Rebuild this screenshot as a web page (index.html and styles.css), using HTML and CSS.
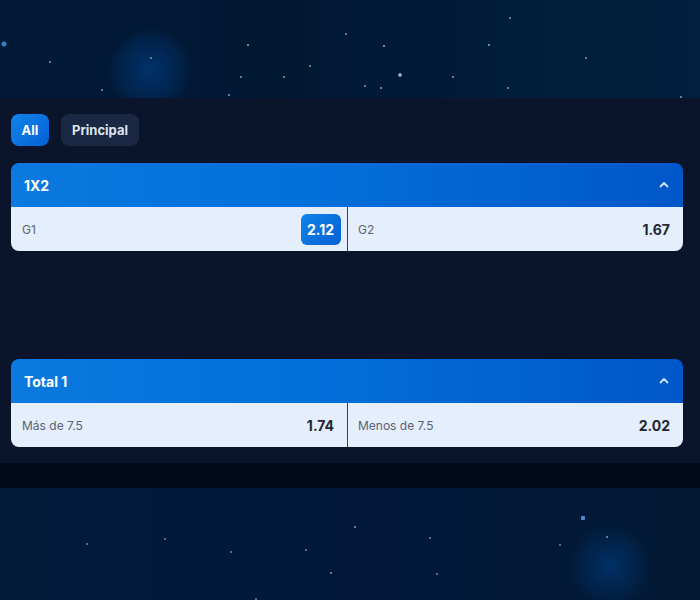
FILE: index.html
```html
<!DOCTYPE html>
<html lang="es">
<head>
<meta charset="utf-8">
<title>Mercados</title>
<link rel="stylesheet" href="styles.css">
</head>
<body>
<div class="sky sky-top"></div>
<main class="panel">
  <div class="tabs">
    <button class="tab tab-active">All</button>
    <button class="tab">Principal</button>
  </div>
  <section class="market">
    <header class="market-head">
      <span class="market-title">1X2</span>
      <svg class="chev" width="10" height="7" viewBox="0 0 10 7"><path d="M1.5 5.5 L5 2 L8.5 5.5" fill="none" stroke="#cfe3ff" stroke-width="1.8" stroke-linecap="round" stroke-linejoin="round"/></svg>
    </header>
    <div class="market-row">
      <div class="outcome"><span class="label">G1</span><span class="odd odd-active">2.12</span></div>
      <div class="outcome"><span class="label">G2</span><span class="odd">1.67</span></div>
    </div>
  </section>
  <div class="spacer"></div>
  <section class="market">
    <header class="market-head">
      <span class="market-title">Total 1</span>
      <svg class="chev" width="10" height="7" viewBox="0 0 10 7"><path d="M1.5 5.5 L5 2 L8.5 5.5" fill="none" stroke="#cfe3ff" stroke-width="1.8" stroke-linecap="round" stroke-linejoin="round"/></svg>
    </header>
    <div class="market-row">
      <div class="outcome"><span class="label">Más de 7.5</span><span class="odd">1.74</span></div>
      <div class="outcome"><span class="label">Menos de 7.5</span><span class="odd">2.02</span></div>
    </div>
  </section>
</main>
<div class="band"></div>
<div class="sky sky-bottom"></div>
</body>
</html>
```
FILE: styles.css
```css
html, body {
  margin: 0;
  padding: 0;
}
body {
  width: 700px;
  height: 600px;
  overflow: hidden;
  background: #021a33;
  font-family: Inter, Roboto, "Liberation Sans", sans-serif;
}
.sky {
  background-color: #021a35;
}
.sky-top {
  height: 98px;
  background-image:
    radial-gradient(circle at 4px 44px, #3a7fc0 0 2px, transparent 3px),
    radial-gradient(circle at 50px 62px, #5a7da0 0 1px, transparent 1.5px),
    radial-gradient(circle at 151px 58px, #5a7da0 0 1px, transparent 1.5px),
    radial-gradient(circle at 102px 90px, #5a7da0 0 1px, transparent 1.5px),
    radial-gradient(circle at 248px 45px, #6a8db0 0 1px, transparent 1.5px),
    radial-gradient(circle at 241px 77px, #5a7da0 0 1px, transparent 1.5px),
    radial-gradient(circle at 284px 77px, #5a7da0 0 1px, transparent 1.5px),
    radial-gradient(circle at 310px 66px, #5a7da0 0 1px, transparent 1.5px),
    radial-gradient(circle at 346px 34px, #5a7da0 0 1px, transparent 1.5px),
    radial-gradient(circle at 229px 95px, #5a7da0 0 1px, transparent 1.5px),
    radial-gradient(circle at 400px 75px, #8ab0d0 0 1.5px, transparent 2px),
    radial-gradient(circle at 384px 46px, #6a8db0 0 1px, transparent 1.5px),
    radial-gradient(circle at 489px 45px, #6a8db0 0 1px, transparent 1.5px),
    radial-gradient(circle at 510px 18px, #5a7da0 0 1px, transparent 1.5px),
    radial-gradient(circle at 453px 77px, #5a7da0 0 1px, transparent 1.5px),
    radial-gradient(circle at 508px 88px, #5a7da0 0 1px, transparent 1.5px),
    radial-gradient(circle at 586px 58px, #5a7da0 0 1px, transparent 1.5px),
    radial-gradient(circle at 365px 86px, #5a7da0 0 1px, transparent 1.5px),
    radial-gradient(circle at 381px 88px, #5a7da0 0 1px, transparent 1.5px),
    radial-gradient(circle at 681px 97px, #5a7da0 0 1px, transparent 1.5px),
    radial-gradient(circle at 150px 70px, rgba(0, 70, 150, 0.55), rgba(0, 60, 130, 0.25) 32px, transparent 42px),
    linear-gradient(90deg, #021a38 0%, #011833 40%, #01203d 100%);
}
.panel {
  background: #0a142b;
  padding: 16px 11px 16px 11px;
  display: flex;
  flex-direction: column;
}
.tabs {
  display: flex;
  gap: 12px;
  margin-bottom: 17px;
}
.tab {
  height: 32px;
  padding: 0 11px;
  border: 0;
  border-radius: 8px;
  background: #1b2843;
  color: #dde4ee;
  font-family: inherit;
  font-size: 13px;
  font-weight: 700;
  cursor: pointer;
}
.tab-active {
  width: 38px;
  padding: 0;
  background: linear-gradient(135deg, #1185ea 0%, #0560d4 100%);
  color: #ffffff;
}
.market {
  width: 672px;
  border-radius: 8px;
  overflow: hidden;
}
.market-head {
  height: 44px;
  box-sizing: border-box;
  padding: 0 14px 0 13px;
  display: flex;
  align-items: center;
  justify-content: space-between;
  background: linear-gradient(90deg, #0b79df 0%, #036fdb 45%, #0057c9 100%);
}
.market-title {
  color: #ffffff;
  font-size: 14px;
  font-weight: 700;
}
.chev {
  display: block;
  margin-top: -1px;
}
.market-row {
  height: 44px;
  display: grid;
  grid-template-columns: 336px 1fr;
  background: #e4eefc;
}
.outcome {
  display: flex;
  align-items: center;
  justify-content: space-between;
  padding: 0 6px 0 11px;
}
.outcome + .outcome {
  border-left: 1px solid #3b4254;
  padding-left: 10px;
  padding-right: 6px;
}
.label {
  font-size: 12px;
  color: #5c6270;
}
.odd {
  height: 31px;
  display: flex;
  align-items: center;
  padding: 0 7px 0 6px;
  border-radius: 6px;
  font-size: 14px;
  font-weight: 700;
  color: #222733;
}
.odd-active {
  background: linear-gradient(135deg, #0f84ea 0%, #0560d4 100%);
  color: #ffffff;
}
.spacer {
  height: 108px;
}
.band {
  height: 25px;
  background: #020918;
}
.sky-bottom {
  height: 112px;
  background-image:
    radial-gradient(circle at 87px 56px, #4a6d90 0 1px, transparent 1.5px),
    radial-gradient(circle at 165px 51px, #4a6d90 0 1px, transparent 1.5px),
    radial-gradient(circle at 231px 64px, #4a6d90 0 1px, transparent 1.5px),
    radial-gradient(circle at 306px 62px, #4a6d90 0 1px, transparent 1.5px),
    radial-gradient(circle at 331px 85px, #5a7da0 0 1px, transparent 1.5px),
    radial-gradient(circle at 355px 39px, #5a7da0 0 1px, transparent 1.5px),
    radial-gradient(circle at 256px 111px, #4a6d90 0 1px, transparent 1.5px),
    radial-gradient(circle at 350px 127px, #4a6d90 0 1px, transparent 1.5px),
    radial-gradient(circle at 430px 50px, #4a6d90 0 1px, transparent 1.5px),
    radial-gradient(circle at 437px 86px, #4a6d90 0 1px, transparent 1.5px),
    radial-gradient(circle at 493px 139px, #4a6d90 0 1px, transparent 1.5px),
    radial-gradient(circle at 560px 57px, #4a6d90 0 1px, transparent 1.5px),
    radial-gradient(circle at 583px 30px, #4a8ad0 0 2px, transparent 2.5px),
    radial-gradient(circle at 607px 49px, #5a7da0 0 1px, transparent 1.5px),
    radial-gradient(circle at 524px 125px, #4a6d90 0 1px, transparent 1.5px),
    radial-gradient(circle at 610px 78px, rgba(0, 70, 150, 0.5), rgba(0, 60, 130, 0.2) 30px, transparent 42px),
    linear-gradient(90deg, #021c3a 0%, #01183a 50%, #021a34 100%);
}
```
